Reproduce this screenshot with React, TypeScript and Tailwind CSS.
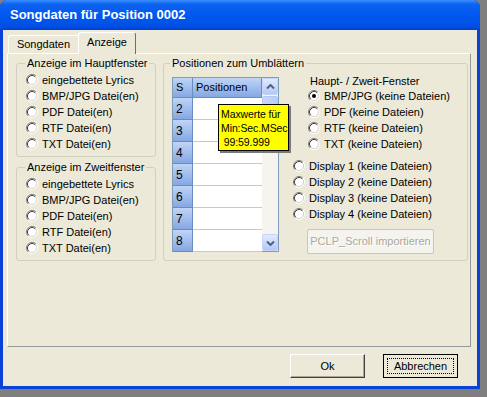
import React from 'react';

const Radio: React.FC<{ checked?: boolean }> = ({ checked }) => (
  <svg width="12" height="12" viewBox="0 0 12 12" className="shrink-0">
    <circle cx="6" cy="6" r="5" fill="#ffffff" />
    <path d="M2.11 9.89 A5.5 5.5 0 0 1 9.89 2.11" stroke="#808080" fill="none" />
    <path d="M2.82 9.18 A4.5 4.5 0 0 1 9.18 2.82" stroke="#404040" fill="none" />
    <path d="M9.89 2.11 A5.5 5.5 0 0 1 2.11 9.89" stroke="#ffffff" fill="none" />
    <path d="M9.18 2.82 A4.5 4.5 0 0 1 2.82 9.18" stroke="#D4D0C8" fill="none" />
    {checked && <circle cx="6" cy="6" r="2" fill="#000000" />}
  </svg>
);

const RadioRow: React.FC<{ label: string; checked?: boolean; indent?: string }> = ({ label, checked, indent = 'pl-[9px]' }) => (
  <div className={`h-[16px] flex items-center gap-[4px] whitespace-nowrap ${indent}`}>
    <Radio checked={checked} />
    <span>{label}</span>
  </div>
);

const Group: React.FC<{ title: string; items: string[] }> = ({ title, items }) => (
  <fieldset className="border border-[#D0D0BF] rounded-[3px] pb-[4px]">
    <legend className="ml-[8px] px-[2px] leading-[13px]">{title}</legend>
    <div className="pt-[2px]">
      {items.map(i => <RadioRow key={i} label={i} />)}
    </div>
  </fieldset>
);

const files = ['eingebettete Lyrics', 'BMP/JPG Datei(en)', 'PDF Datei(en)', 'RTF Datei(en)', 'TXT Datei(en)'];
const rows = ['2', '3', '4', '5', '6', '7', '8'];

const Arrow: React.FC<{ down?: boolean }> = ({ down }) => (
  <svg width="9" height="6" viewBox="0 0 9 6">
    <path d={down ? 'M1 1.5 L4.5 5 L8 1.5' : 'M1 4.5 L4.5 1 L8 4.5'} stroke="#4D6185" strokeWidth="2" fill="none" />
  </svg>
);

const Grid: React.FC = () => (
  <div className="relative mt-[7px] w-[107px] h-[175px] border border-[#7F9DB9] flex bg-white">
    <div className="w-[89px] flex flex-col">
      <div className="h-[20px] flex shrink-0">
        <div className="w-[20px] pl-[3px] flex items-center bg-gradient-to-b from-[#C0D5F5] to-[#85A7E3] border-r border-b border-[#6B8BC4]">S</div>
        <div className="flex-1 pl-[3px] flex items-center bg-gradient-to-b from-[#C0D5F5] to-[#85A7E3] border-r border-b border-[#6B8BC4]">Positionen</div>
      </div>
      {rows.map(r => (
        <div key={r} className="h-[22px] flex shrink-0">
          <div className="w-[20px] pl-[3px] flex items-center text-[12px] bg-gradient-to-b from-[#C0D5F5] to-[#85A7E3] border-r border-b border-[#6B8BC4]">{r}</div>
          <div className="flex-1 border-b border-[#C8C8C8]"></div>
        </div>
      ))}
    </div>
    <div className="w-[16px] flex flex-col bg-[#F5F4EF]">
      <div className="h-[17px] rounded-[2px] border border-[#C3D3FD] bg-gradient-to-b from-[#E1EBFE] to-[#B4C8F6] flex items-center justify-center">
        <Arrow />
      </div>
      <div className="h-[22px] mt-[1px] rounded-[2px] border border-[#B5C8F4] bg-gradient-to-r from-[#C9D8FC] to-[#B8CCF8] flex flex-col items-center justify-center gap-[1px]">
        <div className="w-[7px] h-px bg-[#8CA8E8]" />
        <div className="w-[7px] h-px bg-[#8CA8E8]" />
        <div className="w-[7px] h-px bg-[#8CA8E8]" />
      </div>
      <div className="flex-1" />
      <div className="h-[17px] rounded-[2px] border border-[#C3D3FD] bg-gradient-to-b from-[#E1EBFE] to-[#B4C8F6] flex items-center justify-center">
        <Arrow down />
      </div>
    </div>
    <div className="absolute left-[45px] top-[26px] w-[71px] h-[47px] bg-[#FFFF00] border border-black shadow-[2px_2px_0_#7A7A7A] pl-[2px] pt-[2px] leading-[14px] text-[10.5px] tracking-[-0.1px] whitespace-nowrap">
      <div>Maxwerte für</div>
      <div>Min:Sec.MSec</div>
      <div>&nbsp;99:59.999</div>
    </div>
  </div>
);

export default function App() {
  return (
    <div className="w-[487px] h-[397px] bg-[#7F7F7F] font-['Liberation_Sans',Arial,sans-serif] text-[11px] text-black">
      <div className="w-[480px] h-[389px] flex flex-col rounded-t-[7px] bg-[#0842D8] overflow-hidden">
        <div className="h-[30px] shrink-0 flex items-center pl-[10px] text-white font-bold text-[13px] bg-[linear-gradient(to_bottom,#3C8EFF_0%,#0C63F0_14%,#0058EE_50%,#0052E6_85%,#0041CF_100%)]">
          Songdaten für Position 0002
        </div>
        <div className="flex-1 mx-[3px] mb-[3px] bg-[#ECE9D8] flex flex-col">
          <div className="h-[23px] flex items-end pl-[5px]">
            <div className="w-[70px] h-[18px] flex items-center justify-center border-t border-l border-white rounded-tl-[3px]">Songdaten</div>
            <div className="relative z-10 w-[58px] h-[22px] -mb-px pb-[3px] flex items-center justify-center bg-[#ECE9D8] border-t border-l border-white border-r border-r-[#716F64] rounded-t-[3px]">Anzeige</div>
          </div>
          <div className="ml-[4px] w-[464px] h-[294px] border border-white border-r-[#919B9C] border-b-[#919B9C] flex gap-[7px] pl-[8px] pt-[3px]">
            <div className="w-[140px] flex flex-col gap-[4px]">
              <Group title="Anzeige im Hauptfenster" items={files} />
              <Group title="Anzeige im Zweitfenster" items={files} />
            </div>
            <fieldset className="w-[305px] h-[204px] border border-[#D0D0BF] rounded-[3px]">
              <legend className="ml-[6px] px-[2px] leading-[13px]">Positionen zum Umblättern</legend>
              <div className="flex items-start pl-[8px]">
                <Grid />
                <div className="ml-[14px] mt-[5px] flex flex-col">
                  <div className="pl-[17px] leading-[13px]">Haupt- / Zweit-Fenster</div>
                  <div className="pl-[15px]">
                    <RadioRow indent="" label="BMP/JPG (keine Dateien)" checked />
                    <RadioRow indent="" label="PDF (keine Dateien)" />
                    <RadioRow indent="" label="RTF (keine Dateien)" />
                    <RadioRow indent="" label="TXT (keine Dateien)" />
                  </div>
                  <div className="mt-[6px]">
                    <RadioRow indent="" label="Display 1 (keine Dateien)" />
                    <RadioRow indent="" label="Display 2 (keine Dateien)" />
                    <RadioRow indent="" label="Display 3 (keine Dateien)" />
                    <RadioRow indent="" label="Display 4 (keine Dateien)" />
                  </div>
                  <div className="ml-[14px] mt-[7px] w-[127px] h-[25px] flex items-center justify-center rounded-[2px] border border-[#C9C7BA] bg-[#F4F3EE] text-[#ACA899] [text-shadow:1px_1px_0_#ffffff]">
                    PCLP_Scroll importieren
                  </div>
                </div>
              </div>
            </fieldset>
          </div>
          <div className="mt-[7px] flex justify-end gap-[18px] pr-[19px]">
            <div className="w-[75px] h-[24px] flex items-center justify-center border border-white border-r-[#404040] border-b-[#404040] bg-[#ECE9D8] shadow-[inset_-1px_-1px_0_#ACA899]">Ok</div>
            <div className="w-[75px] h-[24px] border border-black bg-[#ECE9D8] p-[3px]">
              <div className="h-full flex items-center justify-center border border-dotted border-black">Abbrechen</div>
            </div>
          </div>
        </div>
      </div>
    </div>
  );
}
